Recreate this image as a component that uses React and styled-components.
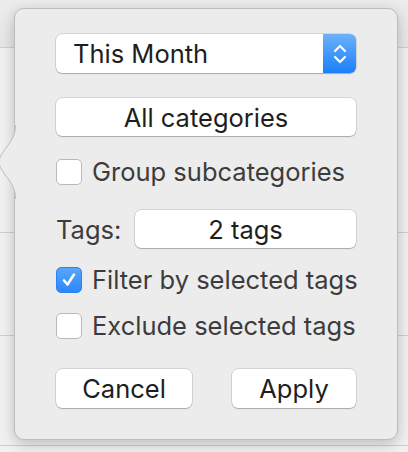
import React from 'react';
import styled, { createGlobalStyle } from 'styled-components';

const GlobalStyle = createGlobalStyle`
  html, body {
    margin: 0;
    padding: 0;
    background: #f0f0f0;
    font-family: Inter, "Liberation Sans", sans-serif;
  }
`;

const Page = styled.div`
  position: relative;
  width: 408px;
  height: 452px;
  overflow: hidden;
  background: #f1f1f1;
`;

const Header = styled.div`
  height: 47px;
  background: linear-gradient(#ececec, #e6e6e6);
  border-bottom: 1px solid #cfcfcf;
`;

const BgRow = styled.div`
  height: ${(p) => p.h}px;
  border-bottom: 1px solid #cfcfcf;
`;

const Popover = styled.div`
  position: absolute;
  left: 14px;
  top: 8px;
  width: 384px;
  height: 432px;
  box-sizing: border-box;
  background: #ececec;
  border: 1px solid #bdbdbd;
  border-radius: 10px;
  box-shadow: 0 4px 14px rgba(0, 0, 0, 0.22);
  padding: 25px 41px 0 41px;
  display: flex;
  flex-direction: column;
  font-size: 25.5px;
  white-space: nowrap;
`;

const Arrow = styled.svg`
  position: absolute;
  left: -16px;
  top: 116px;
`;

const Select = styled.div`
  height: 39px;
  display: flex;
  background: #fff;
  border-radius: 6px;
  box-shadow: 0 0 0 0.5px rgba(0, 0, 0, 0.2), 0 1px 1px rgba(0, 0, 0, 0.2);
  overflow: hidden;
`;

const SelectText = styled.div`
  flex: 1;
  display: flex;
  align-items: center;
  padding-left: 17px;
  color: #1e1e1e;
`;

const Stepper = styled.div`
  width: 33px;
  display: flex;
  align-items: center;
  justify-content: center;
  background: linear-gradient(#6cb1fb, #1b7ffa);
`;

const Button = styled.div`
  height: ${(p) => p.h || 38}px;
  width: ${(p) => (p.w ? `${p.w}px` : 'auto')};
  margin-top: ${(p) => p.mt || 0}px;
  box-sizing: border-box;
  display: flex;
  align-items: center;
  justify-content: center;
  background: #fff;
  border-radius: 6px;
  box-shadow: 0 0 0 0.5px rgba(0, 0, 0, 0.2), 0 1px 1px rgba(0, 0, 0, 0.2);
  color: #1e1e1e;
`;

const CheckRow = styled.label`
  height: 27px;
  margin-top: ${(p) => p.mt}px;
  display: flex;
  align-items: center;
  gap: 10px;
  color: #3c3c3c;
`;

const Box = styled.span`
  width: 26px;
  height: 26px;
  flex: none;
  box-sizing: border-box;
  border-radius: 5px;
  display: flex;
  align-items: center;
  justify-content: center;
  background: ${(p) => (p.checked ? 'linear-gradient(#58a6fc, #2b87fa)' : '#fff')};
  border: 1px solid ${(p) => (p.checked ? '#2b84f0' : '#b9b9b9')};
`;

const TagsRow = styled.div`
  margin-top: 25px;
  display: flex;
  align-items: center;
  justify-content: space-between;
`;

const Label = styled.span`
  color: #3c3c3c;
`;

const Actions = styled.div`
  margin-top: 30px;
  display: flex;
  justify-content: space-between;
`;

const Checkbox = ({ checked, label, mt }) => (
  <CheckRow mt={mt}>
    <Box checked={checked}>
      {checked && (
        <svg width="18" height="18" viewBox="0 0 18 18">
          <path d="M4 9.5 L7.5 13.5 L14 3.5" fill="none" stroke="#fff" strokeWidth="2.6" strokeLinecap="round" strokeLinejoin="round" />
        </svg>
      )}
    </Box>
    {label}
  </CheckRow>
);

const App = () => {
  return (
    <Page>
      <GlobalStyle />
      <Header />
      <BgRow h={184} />
      <BgRow h={102} />
      <BgRow h={109} />
      <Popover>
        <Arrow width="32" height="74" viewBox="0 0 32 74">
          <path d="M16.5 0 C16.5 10 13 15 7 23 C1 31 0 34 0 37 C0 40 1 43 7 51 C13 59 16.5 64 16.5 74 L32 74 L32 0 Z" fill="#ececec" />
          <path d="M16.5 0 C16.5 10 13 15 7 23 C1 31 0 34 0 37 C0 40 1 43 7 51 C13 59 16.5 64 16.5 74" fill="none" stroke="#bdbdbd" strokeWidth="1" />
        </Arrow>
        <Select>
          <SelectText>This Month</SelectText>
          <Stepper>
            <svg width="16" height="24" viewBox="0 0 16 24">
              <path d="M3 9 L8 4 L13 9 M3 15 L8 20 L13 15" fill="none" stroke="#fff" strokeWidth="2.2" strokeLinecap="round" strokeLinejoin="round" />
            </svg>
          </Stepper>
        </Select>
        <Button mt={25}>All categories</Button>
        <Checkbox mt={22} label="Group subcategories" />
        <TagsRow>
          <Label>Tags:</Label>
          <Button w={221}>2 tags</Button>
        </TagsRow>
        <Checkbox mt={18} checked label="Filter by selected tags" />
        <Checkbox mt={19} label="Exclude selected tags" />
        <Actions>
          <Button w={136} h={39}>Cancel</Button>
          <Button w={124} h={39}>Apply</Button>
        </Actions>
      </Popover>
    </Page>
  );
};

export default App;
